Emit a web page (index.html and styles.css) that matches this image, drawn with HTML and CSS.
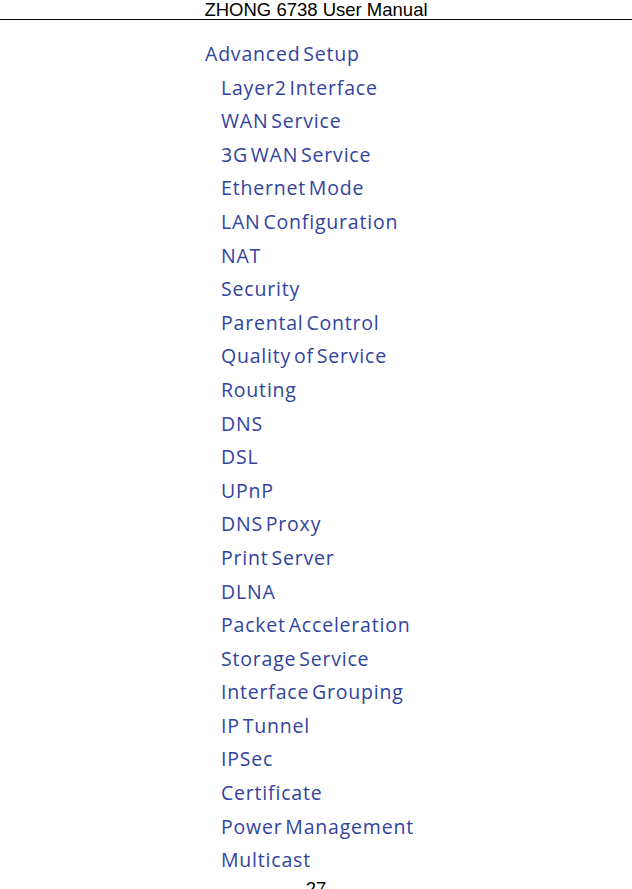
FILE: index.html
```html
<!DOCTYPE html>
<html>
<head>
<meta charset="utf-8">
<link rel="stylesheet" href="styles.css">
</head>
<body>
<header class="page-header">ZHONG 6738 User Manual</header>
<main class="shot">
  <div class="menu-title">Advanced Setup</div>
  <ul class="menu">
    <li>Layer2 Interface</li>
    <li>WAN Service</li>
    <li>3G WAN Service</li>
    <li>Ethernet Mode</li>
    <li>LAN Configuration</li>
    <li>NAT</li>
    <li>Security</li>
    <li>Parental Control</li>
    <li>Quality of Service</li>
    <li>Routing</li>
    <li>DNS</li>
    <li>DSL</li>
    <li>UPnP</li>
    <li>DNS Proxy</li>
    <li>Print Server</li>
    <li>DLNA</li>
    <li>Packet Acceleration</li>
    <li>Storage Service</li>
    <li>Interface Grouping</li>
    <li>IP Tunnel</li>
    <li>IPSec</li>
    <li>Certificate</li>
    <li>Power Management</li>
    <li>Multicast</li>
  </ul>
</main>
<footer class="page-num">27</footer>
</body>
</html>
```
FILE: styles.css
```css
html, body {
  margin: 0;
  padding: 0;
  background: #fff;
  height: 889px;
  overflow: hidden;
}
.page-header {
  font-family: "Liberation Sans", Arial, sans-serif;
  font-size: 18.5px;
  line-height: 19px;
  text-align: center;
  color: #000;
  border-bottom: 1px solid #000;
  height: 19px;
}
.shot {
  padding-left: 205px;
  padding-top: 17px;
  font-family: "Open Sans", "DejaVu Sans", sans-serif;
  color: #3243a0;
}
.menu-title,
.menu li {
  font-size: 19.5px;
  font-weight: 500;
  line-height: 33.6px;
  letter-spacing: 0.8px;
  word-spacing: -3px;
}
.menu {
  list-style: none;
  margin: 0;
  padding: 0 0 0 16px;
  display: flex;
  flex-direction: column;
}
.page-num {
  font-family: "Liberation Sans", Arial, sans-serif;
  font-size: 18.5px;
  line-height: 20px;
  text-align: center;
  position: absolute;
  top: 879px;
  left: 0;
  right: 0;
}
```
